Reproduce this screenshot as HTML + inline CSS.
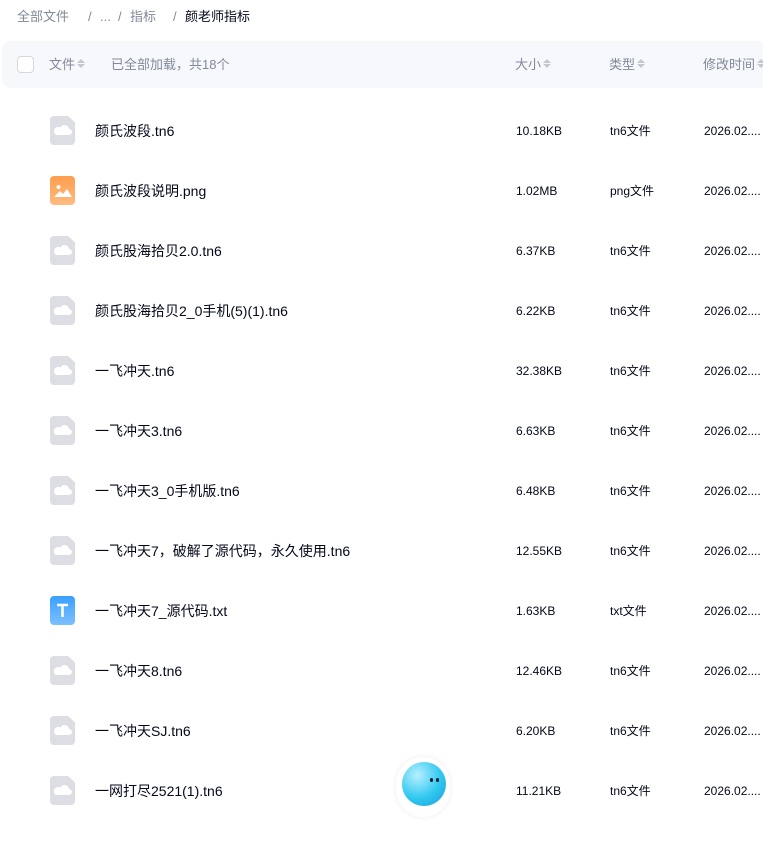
<!DOCTYPE html>
<html><head><meta charset="utf-8"><style>
*{margin:0;padding:0;box-sizing:border-box}
body{width:763px;height:802px;overflow:hidden;background:#fff;font-family:"Liberation Sans","Noto Sans CJK SC",sans-serif;position:relative;color:#03081a;line-height:18px}
.bc{position:absolute;top:8px;left:17px;font-size:13px;color:#818999;white-space:nowrap;height:18px;width:400px}
.bc span{position:absolute;top:0;line-height:18px}
.hd{position:absolute;left:2px;top:41px;width:770px;height:47px;background:#f7f8fc;border-radius:9px;font-size:13px;color:#818999}
.hd .t{position:absolute;top:15px;white-space:nowrap;line-height:18px}
.cb{position:absolute;left:15px;top:15px;width:17px;height:17px;border:1px solid #d4d7de;border-radius:4px;background:#fff}
.ar{display:inline-block;width:8px;vertical-align:middle;margin-left:2px;position:relative;top:-2px}
.ar:before{content:"";display:block;border:4px solid transparent;border-bottom:4px solid #c3c7d0;border-top:0;margin-bottom:1px}
.ar:after{content:"";display:block;border:4px solid transparent;border-top:4px solid #c3c7d0;border-bottom:0}
.row{position:absolute;left:0;width:763px;height:60px}
.ic{position:absolute;left:50px;top:-15px;width:25px;height:29px;border-radius:4px}
.g{background:#dcdee3;clip-path:polygon(0 0,72% 0,100% 22%,100% 100%,0 100%)}
.nm{position:absolute;left:95px;top:-10px;font-size:14px;white-space:nowrap;line-height:20px}
.sz,.tp,.dt{position:absolute;top:-9px;font-size:12px;white-space:nowrap;line-height:18px}
.sz{left:516px}.tp{left:610px}.dt{left:704px}
</style></head><body>
<div class="bc"><span style="left:0">全部文件</span><span style="left:71px">/</span><span style="left:83px">...</span><span style="left:101px">/</span><span style="left:113px">指标</span><span style="left:156px">/</span><span style="left:168px;color:#03081a">颜老师指标</span></div>
<div class="hd"><div class="cb"></div>
<div class="t" style="left:47px">文件<i class="ar"></i></div>
<div class="t" style="left:109px">已全部加载，共18个</div>
<div class="t" style="left:513px">大小<i class="ar"></i></div>
<div class="t" style="left:607px">类型<i class="ar"></i></div>
<div class="t" style="left:701px">修改时间<i class="ar"></i></div>
</div>
<div id="rows"></div>
<script>
var d=[["颜氏波段.tn6","10.18KB","tn6文件","g"],["颜氏波段说明.png","1.02MB","png文件","p"],["颜氏股海拾贝2.0.tn6","6.37KB","tn6文件","g"],["颜氏股海拾贝2_0手机(5)(1).tn6","6.22KB","tn6文件","g"],["一飞冲天.tn6","32.38KB","tn6文件","g"],["一飞冲天3.tn6","6.63KB","tn6文件","g"],["一飞冲天3_0手机版.tn6","6.48KB","tn6文件","g"],["一飞冲天7，破解了源代码，永久使用.tn6","12.55KB","tn6文件","g"],["一飞冲天7_源代码.txt","1.63KB","txt文件","t"],["一飞冲天8.tn6","12.46KB","tn6文件","g"],["一飞冲天SJ.tn6","6.20KB","tn6文件","g"],["一网打尽2521(1).tn6","11.21KB","tn6文件","g"]];
var h="";
d.forEach(function(r,i){var y=131+60*i;var ic;
if(r[3]=="g")ic='<div class="ic g"><svg width="25" height="29" style="position:absolute;left:0;top:0"><path d="M6 19h13a3 3 0 0 0 0-6 4.5 4.5 0 0 0-8.5-1.5A3.5 3.5 0 0 0 6 19z" fill="#fff"/></svg></div>';
else if(r[3]=="p")ic='<div class="ic" style="background:linear-gradient(#ff9d4d,#ffbb80)"><svg width="25" height="29" style="position:absolute;left:0;top:0"><circle cx="8.5" cy="11" r="2" fill="#fff"/><path d="M4 21l6-6 3 3 4-5 5 8z" fill="#fff"/></svg></div>';
else ic='<div class="ic" style="background:linear-gradient(#3aa0ff,#7cc0ff)"><svg width="25" height="29" style="position:absolute;left:0;top:0"><path d="M7 9h11M12.5 9v12" stroke="#fff" stroke-width="2.6" fill="none"/></svg></div>';
h+='<div class="row" style="top:'+y+'px">'+ic+'<div class="nm">'+r[0]+'</div><div class="sz">'+r[1]+'</div><div class="tp">'+r[2]+'</div><div class="dt">2026.02....</div></div>';});
document.getElementById("rows").innerHTML=h;
</script>
<div style="position:absolute;left:396px;top:757px;width:54px;height:60px;border-radius:27px;background:#fff;box-shadow:0 0 6px rgba(0,0,0,.08)"></div>
<div style="position:absolute;left:402px;top:762px;width:44px;height:44px;border-radius:50%;background:radial-gradient(circle at 35% 30%,#b8f0ff,#30c8f0 55%,#1a9ad8)"></div>
<div style="position:absolute;left:430px;top:778px;width:3px;height:4px;border-radius:2px;background:#123"></div>
<div style="position:absolute;left:436px;top:778px;width:3px;height:4px;border-radius:2px;background:#123"></div>
</body></html>
